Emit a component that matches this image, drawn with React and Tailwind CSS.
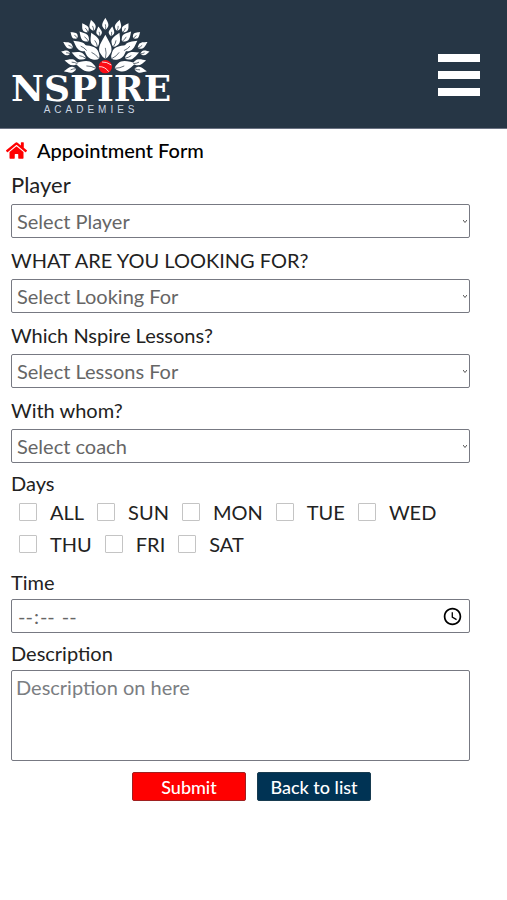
import React, { useState } from "react";
import { FaHome } from "react-icons/fa";

// one half of the tree, mirrored for the other: x, y, length, width, angle
const sideLeaves = [
  [272, 154, 66, 34, -50],
  [256, 196, 66, 30, -76],
  [283, 118, 46, 24, -24],
  [240, 136, 50, 24, -54],
  [236, 165, 46, 20, -68],
  [213, 185, 40, 17, -76],
  [210, 209, 38, 17, -102],
  [277, 75, 34, 18, -14],
  [297, 93, 30, 16, -8],
  [255, 82, 32, 18, -32],
  [252, 108, 40, 21, -42],
  [222, 104, 28, 17, -48],
  [204, 134, 34, 17, -58],
  [197, 157, 28, 14, -76],
];

const selects = [
  { id: "player", label: "Player", placeholder: "Select Player", labelSize: "text-[22px]" },
  { id: "lookingFor", label: "WHAT ARE YOU LOOKING FOR?", placeholder: "Select Looking For", labelSize: "text-xl" },
  { id: "lessons", label: "Which Nspire Lessons?", placeholder: "Select Lessons For", labelSize: "text-xl" },
  { id: "coach", label: "With whom?", placeholder: "Select coach", labelSize: "text-xl" },
];

const days = ["ALL", "SUN", "MON", "TUE", "WED", "THU", "FRI", "SAT"];

function Leaf({ x, y, length, width, angle }) {
  const h = length / 2;
  const w = width / 2;
  return (
    <g transform={`translate(${x} ${y}) rotate(${angle})`}>
      <path d={`M0 ${-h} C${w * 0.5} ${-h * 0.5} ${w * 1.5} ${h * 0.1} ${w * 0.8} ${h * 0.6} Q${w * 0.5} ${h * 0.9} 0 ${h} Q${-w * 0.5} ${h * 0.9} ${-w * 0.8} ${h * 0.6} C${-w * 1.5} ${h * 0.1} ${-w * 0.5} ${-h * 0.5} 0 ${-h}Z`} fill="#fff" />
      <path d={`M0 ${h} Q${w * 0.25} ${h * 0.5} 0 ${h * 0.1}`} fill="none" stroke="#263645" strokeWidth="2" />
    </g>
  );
}

function Logo() {
  return (
    <a href="#home" aria-label="Nspire Academies" className="flex flex-col items-center text-white">
      <svg viewBox="180 50 273 174" className="ml-7 h-[58px] w-[91px]" aria-hidden="true">
        <Leaf x={316} y={70} length={36} width={18} angle={0} />
        {sideLeaves.map(([x, y, length, width, angle]) => (
          <React.Fragment key={`${x}-${y}`}>
            <Leaf x={x} y={y} length={length} width={width} angle={angle} />
            <Leaf x={632 - x} y={y} length={length} width={width} angle={-angle} />
          </React.Fragment>
        ))}
        <Leaf x={316} y={139} length={72} width={36} angle={0} />
        <circle cx="316" cy="199" r="20" fill="#fb0d16" />
        <path d="M297 199 Q315 198 326 214 M306 185 Q320 184 334 194" fill="none" stroke="#fff" strokeWidth="2.5" />
      </svg>
      <span className="font-['DejaVu_Serif'] text-[36px] leading-[26px] font-bold">NSPIRE</span>
      <span className="mt-[3px] font-['Liberation_Sans'] text-[10px] leading-[11px] tracking-[4px] text-slate-300">ACADEMIES</span>
    </a>
  );
}

export default function App() {
  const [checked, setChecked] = useState([]);

  const toggleDay = (day) =>
    setChecked(checked.includes(day) ? checked.filter((d) => d !== day) : [...checked, day]);

  return (
    <div className="min-h-screen bg-white font-['Lato',sans-serif] text-[#222]">
      <header className="flex items-center justify-between border-b border-gray-500 bg-[#263645] pt-[17px] pr-[27px] pb-[13px] pl-[11px]">
        <Logo />
        <button type="button" aria-label="Menu" className="mt-[18px] flex flex-col gap-[9px]">
          <span className="h-2 w-[42px] bg-white" />
          <span className="h-2 w-[42px] bg-white" />
          <span className="h-2 w-[42px] bg-white" />
        </button>
      </header>

      <main>
        <div className="flex h-[42px] items-center gap-[10px] pl-[6px]">
          <a href="#home" aria-label="Home" className="text-[#ff0000]">
            <FaHome size={21} />
          </a>
          <h1 className="text-xl font-medium text-black">Appointment Form</h1>
        </div>

        <form className="pr-[37px] pl-[11px] text-xl" onSubmit={(e) => e.preventDefault()}>
          {selects.map(({ id, label, placeholder, labelSize }) => (
            <div key={id} className="mb-2">
              <label htmlFor={id} className={`block h-[33px] leading-7 ${labelSize}`}>{label}</label>
              <div className="relative">
                <select id={id} defaultValue="" className="block h-[34px] w-full appearance-none rounded-xs border border-[#777982] bg-white px-[5px] text-[#666]">
                  <option value="">{placeholder}</option>
                </select>
                <svg viewBox="0 0 4 3" className="pointer-events-none absolute top-4 right-[3px] h-[3px] w-1" aria-hidden="true">
                  <path d="M0 0 L2 2.5 L4 0" fill="none" stroke="#555" />
                </svg>
              </div>
            </div>
          ))}

          <fieldset>
            <legend className="h-[25px] leading-6">Days</legend>
            <div className="flex flex-wrap gap-x-[13px] pl-2">
              {days.map((day) => (
                <label key={day} className="flex h-8 items-center gap-[13px]">
                  <input
                    type="checkbox"
                    checked={checked.includes(day)}
                    onChange={() => toggleDay(day)}
                    className="size-[18px] appearance-none rounded-[1px] border border-[#c4c4c4] checked:bg-[#003354]"
                  />
                  {day}
                </label>
              ))}
            </div>
          </fieldset>

          <label htmlFor="time" className="mt-2 block h-[31px] leading-7">Time</label>
          <input id="time" type="time" className="block h-[34px] w-full rounded-xs border border-[#777982] pr-[3px] pl-[5px] text-[#666]" />

          <label htmlFor="description" className="mt-1 block h-[33px] leading-8">Description</label>
          <textarea id="description" placeholder="Description on here" className="block h-[91px] w-full resize-none rounded-xs border border-[#777982] px-1 py-[2px] placeholder:text-[#7b7e82]" />

          <div className="mt-[11px] flex justify-center gap-[11px] pl-[22px] text-lg font-medium text-white">
            <button type="submit" className="h-[29px] w-[114px] rounded-xs border border-[#a02020] bg-[#ff0000] leading-6">Submit</button>
            <button type="button" className="h-[29px] w-[114px] rounded-xs border border-[#173b50] bg-[#003354] leading-6">Back to list</button>
          </div>
        </form>
      </main>
    </div>
  );
}
